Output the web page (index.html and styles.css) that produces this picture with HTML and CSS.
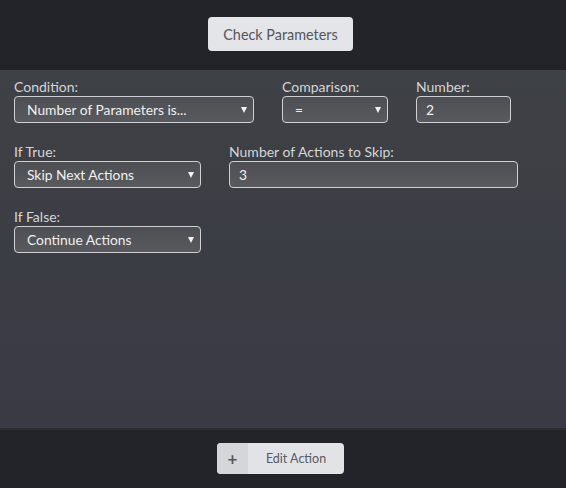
FILE: index.html
```html
<!DOCTYPE html>
<html>
<head>
<meta charset="utf-8">
<link rel="stylesheet" href="styles.css">
</head>
<body>
<div class="header">
  <button class="btn-check">Check Parameters</button>
</div>
<div class="panel">
  <div class="row">
    <div class="field w-cond">
      <label>Condition:</label>
      <div class="select"><select><option>Number of Parameters is...</option></select></div>
    </div>
    <div class="field w-comp">
      <label>Comparison:</label>
      <div class="select"><select><option>=</option></select></div>
    </div>
    <div class="field w-num">
      <label>Number:</label>
      <input class="text" type="text" value="2">
    </div>
  </div>
  <div class="row">
    <div class="field w-true">
      <label>If True:</label>
      <div class="select"><select><option>Skip Next Actions</option></select></div>
    </div>
    <div class="field w-skip">
      <label>Number of Actions to Skip:</label>
      <input class="text" type="text" value="3">
    </div>
  </div>
  <div class="row">
    <div class="field w-true">
      <label>If False:</label>
      <div class="select"><select><option>Continue Actions</option></select></div>
    </div>
  </div>
</div>
<div class="footer">
  <button class="btn-edit"><span class="plus">+</span><span class="edit-label">Edit Action</span></button>
</div>
</body>
</html>
```

FILE: styles.css
```css
html, body {
  margin: 0;
  padding: 0;
}
body {
  width: 566px;
  height: 488px;
  overflow: hidden;
  background: #232429;
  font-family: Lato, "Open Sans", sans-serif;
}
.header {
  height: 70px;
  box-sizing: border-box;
  padding: 17px 5px 0 0;
  display: flex;
  justify-content: center;
  align-items: flex-start;
  background: #232429;
}
.btn-check {
  width: 145px;
  height: 34px;
  border: none;
  border-radius: 4px;
  background: #e4e5e8;
  color: #55565a;
  font-family: Lato, sans-serif;
  font-size: 14.4px;
  padding: 0;
}
.panel {
  height: 358px;
  box-sizing: border-box;
  padding: 7.5px 14px 0;
  background: linear-gradient(#3e4145, #393a44);
}
.row {
  display: flex;
  gap: 28px;
  margin-bottom: 20px;
}
.field label {
  display: block;
  font-size: 14px;
  line-height: 18px;
  color: #d4d6d8;
}
.w-cond { width: 240px; }
.w-comp { width: 106px; }
.w-num { width: 95px; }
.w-true { width: 187px; }
.w-skip { width: 289px; }
.select {
  position: relative;
}
.select select,
.text {
  display: block;
  width: 100%;
  height: 27px;
  box-sizing: border-box;
  margin: 0;
  border: 1px solid #cfd0d3;
  border-radius: 4px;
  background: linear-gradient(#4d4f54, #585a5e);
  color: #f0f0f1;
  font-family: Lato, sans-serif;
  font-size: 13.8px;
  outline: none;
}
.select select {
  appearance: none;
  -webkit-appearance: none;
  padding: 0 20px 0 12px;
}
.text {
  padding: 0 9px;
}
.select::after {
  content: "";
  position: absolute;
  right: 7px;
  top: 11px;
  border-left: 3.5px solid transparent;
  border-right: 3.5px solid transparent;
  border-top: 6px solid #f2f2f2;
  pointer-events: none;
}
.footer {
  height: 60px;
  box-sizing: border-box;
  border-top: 2px solid #2d2e35;
  padding: 13px 5px 0 0;
  display: flex;
  justify-content: center;
  align-items: flex-start;
  background: #232429;
}
.btn-edit {
  width: 127px;
  height: 31px;
  display: flex;
  padding: 0;
  border: none;
  border-radius: 4px;
  overflow: hidden;
  background: #e2e3e7;
  font-family: Lato, sans-serif;
}
.plus {
  width: 31px;
  height: 31px;
  display: flex;
  align-items: center;
  justify-content: center;
  background: #d5d6da;
  color: #55565b;
  font-size: 17px;
  font-weight: 700;
}
.edit-label {
  flex: 1;
  display: flex;
  align-items: center;
  justify-content: center;
  color: #575a61;
  font-size: 12.5px;
}
```
